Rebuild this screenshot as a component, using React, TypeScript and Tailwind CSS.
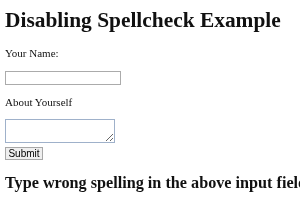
export default function App() {
  return (
    <div className="min-h-[210px] overflow-hidden bg-white px-[5px] pt-[8px] font-['Liberation_Serif',serif] text-[#111]">
      <h1 className="whitespace-nowrap text-[21.4px] font-bold leading-[25px]">Disabling Spellcheck Example</h1>

      <p className="mt-[14px] text-[11px] leading-[13px]">Your Name:</p>
      <input
        type="text"
        spellCheck={false}
        className="mt-[11px] block h-[14px] w-[116px] border border-[#ababab] bg-white"
      />

      <p className="mt-[11px] text-[11px] leading-[13px]">About Yourself</p>
      <textarea
        spellCheck={false}
        className="mt-[10px] block h-[24px] w-[110px] border border-[#9fb1ca] bg-white"
      />
      <button className="mt-[4px] block h-[13px] w-[38px] border border-[#a8a8a8] bg-[#efefef] font-['Liberation_Sans',sans-serif] text-[10px] leading-none text-black">
        Submit
      </button>

      <h2 className="mt-[14px] whitespace-nowrap text-[16.2px] font-bold leading-[19px]">
        Type wrong spelling in the above input field
      </h2>
    </div>
  );
}
